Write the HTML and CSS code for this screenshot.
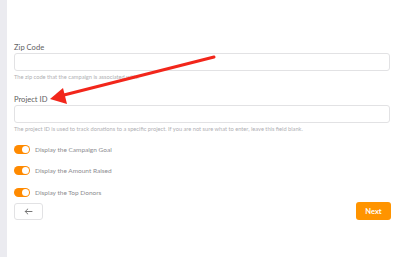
FILE: index.html
```
<!DOCTYPE html>
<html lang="en">
  <head>
    <meta charset="utf-8" />
    <title>Campaign settings</title>
    <link rel="stylesheet" href="styles.css">
  </head>
  <body>
    <div class="page">
      <div class="sidebar"></div>
      <div class="main">
        <div class="field">
          <label class="field-label">Zip Code</label>
          <input type="text" class="field-input" />
          <div class="field-help">The zip code that the campaign is associated with.</div>
        </div>
        <div class="field">
          <label class="field-label">Project ID</label>
          <input type="text" class="field-input" />
          <div class="field-help">The project ID is used to track donations to a specific project. If you are not sure what to enter, leave this field blank.</div>
        </div>

        <div class="toggles">
          <div class="toggle-row">
            <span class="toggle on"><span class="knob"></span></span>
            Display the Campaign Goal
          </div>
          <div class="toggle-row">
            <span class="toggle on"><span class="knob"></span></span>
            Display the Amount Raised
          </div>
          <div class="toggle-row">
            <span class="toggle on"><span class="knob"></span></span>
            Display the Top Donors
          </div>
        </div>

        <div class="actions">
          <button class="btn-back">
            <svg width="9" height="7" viewBox="0 0 9 7">
              <path d="M8 3.5H1.2M3.8 1L1.2 3.5L3.8 6" fill="none" stroke="#777" stroke-width="1" stroke-linecap="round" stroke-linejoin="round" />
            </svg>
          </button>
          <button class="btn-next">Next</button>
        </div>
      </div>
    </div>

    <!-- annotation arrow over the form -->
    <svg class="arrow" width="394" height="257" viewBox="0 0 394 257">
      <line x1="214" y1="57" x2="60" y2="96" stroke="#f2261b" stroke-width="3" stroke-linecap="round" />
      <polygon points="50,99 63,88 67,104" fill="#f2261b" />
    </svg>
  </body>
</html>
```

FILE: styles.css
```
body {
  margin: 0;
  background-color: #fff;
  font-family: Lato, "Liberation Sans", sans-serif;
  color: #555;
}

.page {
  display: flex;
  height: 257px;
}

.sidebar {
  width: 7px;
  background-color: #ebebf0;
}

.main {
  flex: 1;
  padding: 42px 4px 0 7px;
}

.field {
  margin-bottom: 13px;
}

.field-label {
  display: block;
  font-size: 7.6px;
  line-height: 11px;
  margin-bottom: 0;
  color: #5f5f63;
}

.field-input {
  display: block;
  box-sizing: border-box;
  width: 100%;
  height: 18px;
  margin: 0;
  border: 1px solid #e2e2e4;
  border-radius: 3px;
  background: #fff;
  outline: none;
}

.field-help {
  margin-top: 2px;
  font-size: 5.7px;
  line-height: 8px;
  color: #b0b0b4;
}

.toggles {
  margin-top: -2px;
}

.toggle-row {
  display: flex;
  align-items: center;
  gap: 5px;
  height: 10px;
  margin-bottom: 11.7px;
  font-size: 6.5px;
  color: #8c8c90;
}

.toggle {
  position: relative;
  display: inline-block;
  width: 16px;
  height: 9px;
  border-radius: 5px;
  background-color: #ff8a00;
}

.toggle.on .knob {
  position: absolute;
  top: 1px;
  right: 1px;
  width: 7px;
  height: 7px;
  border-radius: 50%;
  background-color: #fff;
}

.actions {
  display: flex;
  justify-content: space-between;
  align-items: center;
  margin-top: -7px;
}

.btn-back {
  width: 29px;
  height: 17px;
  padding: 0;
  border: 1px solid #e2e2e4;
  border-radius: 3px;
  background: #fff;
  display: flex;
  align-items: center;
  justify-content: center;
}

.btn-next {
  width: 35px;
  height: 18px;
  padding: 0;
  border: none;
  border-radius: 3px;
  background-color: #ff9400;
  color: #fff;
  font-family: Lato, "Liberation Sans", sans-serif;
  font-size: 7.5px;
  font-weight: bold;
  margin-right: -1px;
}

.arrow {
  position: absolute;
  top: 0;
  left: 0;
  pointer-events: none;
}
```
